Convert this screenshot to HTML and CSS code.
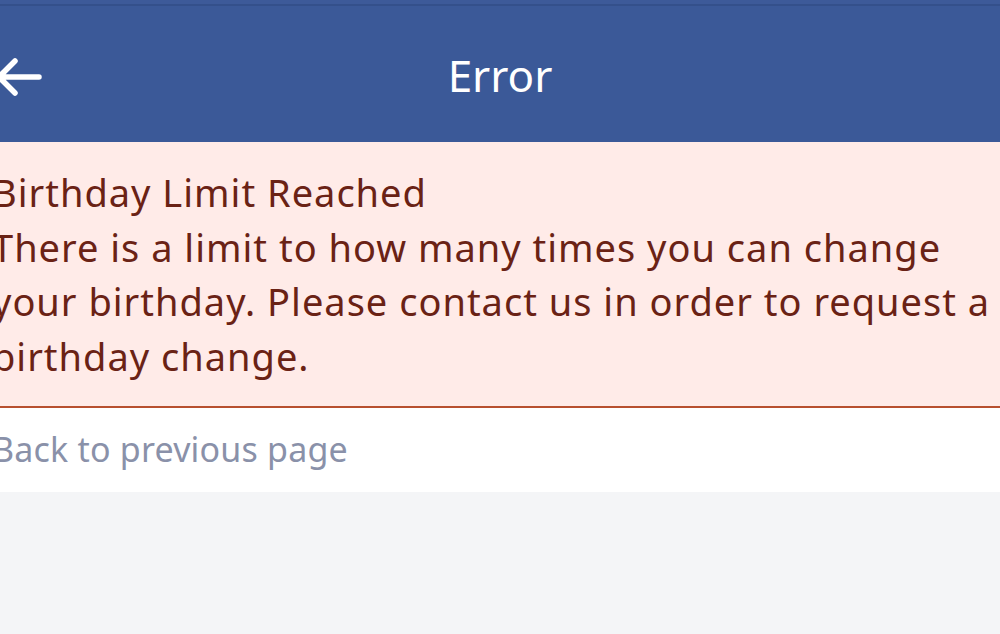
FILE: index.html
```html
<!DOCTYPE html>
<html lang="en">
<head>
  <meta charset="UTF-8" />
  <meta name="viewport" content="width=device-width, initial-scale=1.0" />
  <title>Error</title>
  <link rel="stylesheet" href="styles.css">
</head>
<body>
  <div class="topbar"></div>
  <header class="header">
    <a class="back-btn" href="#" aria-label="Back">
      <svg width="48" height="40" viewBox="0 0 48 40">
        <path d="M1 20 H41 M1 20 L17 4 M1 20 L17 36" fill="none" stroke="#fff" stroke-width="5.5" stroke-linecap="round" stroke-linejoin="round" />
      </svg>
    </a>
    <h1 class="title">Error</h1>
  </header>

  <div class="error-box">
    <div class="error-text">
      <p class="error-title">Birthday Limit Reached</p>
      <p>There is a limit to how many times you can change your birthday. Please contact us in order to request a birthday change.</p>
    </div>
  </div>

  <div class="back-row">
    <a class="back-link" href="#">Back to previous page</a>
  </div>
</body>
</html>
```

FILE: styles.css
```css
* {
  margin: 0;
  padding: 0;
  box-sizing: border-box;
}

body {
  font-family: "Noto Sans", Lato, sans-serif;
  background: #f4f5f7;
  height: 634px;
  overflow: hidden;
}

.topbar {
  height: 6px;
  background: #3d5a99;
  border-bottom: 2px solid #34508b;
}

.header {
  position: relative;
  height: 136px;
  background: #3b5998;
  display: flex;
  align-items: center;
  justify-content: center;
}

.back-btn {
  position: absolute;
  left: -2px;
  top: 51px;
  display: block;
  line-height: 0;
}

.title {
  color: #fff;
  font-size: 44px;
  font-weight: 400;
  margin-top: 2px;
}

.error-box {
  background: #ffebe8;
  border-bottom: 2px solid #b8502f;
  padding: 23px 0 23px;
}

.error-text {
  margin-left: -8px;
  color: #6a2215;
  font-size: 38px;
  letter-spacing: 1px;
  line-height: 54.5px;
  width: 1020px;
}

.back-row {
  background: #fff;
  height: 84px;
  display: flex;
  align-items: center;
}

.back-link {
  margin-left: -8px;
  color: #8a91a9;
  font-size: 34px;
  letter-spacing: 0.2px;
  text-decoration: none;
  margin-top: -2px;
}
```
